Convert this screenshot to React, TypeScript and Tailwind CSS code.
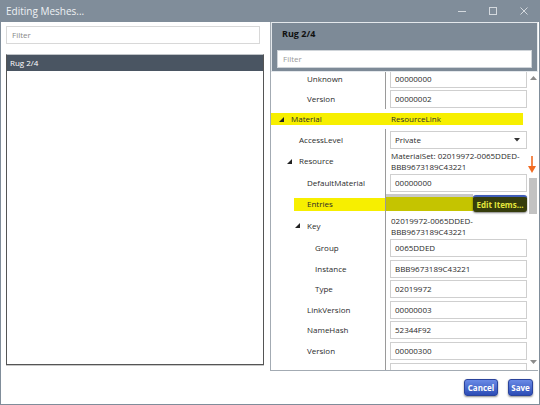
import React from 'react'

type Row = {
  label: string
  kind: 'box' | 'select' | 'two' | 'material' | 'entries'
  h: string
  pl?: string
  exp?: boolean
  value?: string
  lines?: string[]
}

const rows: Row[] = [
  { label: 'Unknown', kind: 'box', h: 'h-[21px]', pl: 'pl-[36px]', value: '00000000' },
  { label: 'Version', kind: 'box', h: 'h-[20px]', pl: 'pl-[36px]', value: '00000002' },
  { label: 'Material', kind: 'material', h: 'h-[20px]' },
  { label: 'AccessLevel', kind: 'select', h: 'h-[21px]', pl: 'pl-[28px]', value: 'Private' },
  {
    label: 'Resource',
    kind: 'two',
    h: 'h-[22px]',
    pl: 'pl-[16px]',
    exp: true,
    lines: ['MaterialSet: 02019972-0065DDED-', 'BBB9673189C43221'],
  },
  { label: 'DefaultMaterial', kind: 'box', h: 'h-[22px]', pl: 'pl-[36px]', value: '00000000' },
  { label: 'Entries', kind: 'entries', h: 'h-[20px]' },
  {
    label: 'Key',
    kind: 'two',
    h: 'h-[23px]',
    pl: 'pl-[24px]',
    exp: true,
    lines: ['02019972-0065DDED-', 'BBB9673189C43221'],
  },
  { label: 'Group', kind: 'box', h: 'h-[21px]', pl: 'pl-[44px]', value: '0065DDED' },
  { label: 'Instance', kind: 'box', h: 'h-[21px]', pl: 'pl-[44px]', value: 'BBB9673189C43221' },
  { label: 'Type', kind: 'box', h: 'h-[20px]', pl: 'pl-[44px]', value: '02019972' },
  { label: 'LinkVersion', kind: 'box', h: 'h-[21px]', pl: 'pl-[36px]', value: '00000003' },
  { label: 'NameHash', kind: 'box', h: 'h-[20px]', pl: 'pl-[36px]', value: '52344F92' },
  { label: 'Version', kind: 'box', h: 'h-[21px]', pl: 'pl-[36px]', value: '00000300' },
  { label: 'MinVertexIndex', kind: 'box', h: 'h-[21px]', pl: 'pl-[12px]', value: '0' },
]

function Expander() {
  return (
    <svg width="5" height="5" viewBox="0 0 5 5" className="shrink-0 mr-[7px]">
      <polygon points="5,0 5,5 0,5" fill="#222" />
    </svg>
  )
}

function ValueBox({ children }: { children: React.ReactNode }) {
  return (
    <div className="h-[18px] w-[137px] border border-[#cfcfcf] bg-white flex items-center pl-[4px]">
      {children}
    </div>
  )
}

function PropRow({ row }: { row: Row }) {
  if (row.kind === 'material') {
    return (
      <div className={`${row.h} flex items-center`}>
        <div className="h-[12px] w-[252px] bg-[#f7ef00] flex items-center pl-[8px]">
          <Expander />
          <span className="w-[100px]">Material</span>
          <span>ResourceLink</span>
        </div>
      </div>
    )
  }

  if (row.kind === 'entries') {
    return (
      <div className={`${row.h} flex`}>
        <div className="w-[115px] shrink-0 border-r border-[#9a9a9a] flex items-center pl-[23px]">
          <div className="h-[13px] flex-1 bg-[#f7ef00] flex items-center pl-[13px]">Entries</div>
        </div>
        <div className="flex-1 flex pr-[1px]">
          <div className="flex-1 flex flex-col">
            <div className="h-[3px] bg-[#c9c9c9]" />
            <div className="h-[14px] bg-[#c5c400]" />
          </div>
          <div className="w-[54px] h-[17px] mt-[1px] rounded-[3px] bg-[#363d0c] border-t-2 border-[#3f5cb8] flex items-center justify-center text-[#e4e63c] font-bold shadow-[0_1px_2px_rgba(0,0,0,0.5)]">
            Edit Items...
          </div>
        </div>
      </div>
    )
  }

  return (
    <div className={`${row.h} flex`}>
      <div className={`w-[115px] shrink-0 border-r border-[#9a9a9a] flex items-center ${row.pl}`}>
        {row.exp && <Expander />}
        <span>{row.label}</span>
      </div>
      <div className="flex-1 pl-[4px] flex items-center">
        {row.kind === 'box' && <ValueBox>{row.value}</ValueBox>}
        {row.kind === 'select' && (
          <ValueBox>
            <span className="flex-1">{row.value}</span>
            <svg width="6" height="4" viewBox="0 0 6 4" className="mr-[6px]">
              <polygon points="0,0 6,0 3,3.5" fill="#333" />
            </svg>
          </ValueBox>
        )}
        {row.kind === 'two' && (
          <div className="pl-[1px] leading-[11px]">
            {row.lines?.map((l) => (
              <div key={l}>{l}</div>
            ))}
          </div>
        )}
      </div>
    </div>
  )
}

function ScrollArrow({ up }: { up?: boolean }) {
  return (
    <svg width="7" height="4" viewBox="0 0 7 4">
      <polygon points={up ? '0,4 7,4 3.5,0' : '0,0 7,0 3.5,4'} fill="#8c8c8c" />
    </svg>
  )
}

export default function App() {
  return (
    <div className="w-[540px] h-[405px] bg-[#808d9a] flex flex-col text-[8px] text-[#2b2b2b] font-['Open_Sans','Noto_Sans',sans-serif] overflow-hidden">
      {/* title bar */}
      <div className="h-[22px] shrink-0 flex items-center pl-[6px] text-[#eef1f4]">
        <span className="text-[10px] flex-1">Editing Meshes...</span>
        <div className="w-[8px] h-px bg-[#d4d9de] mr-[23px]" />
        <div className="w-[8px] h-[8px] border border-[#d4d9de] mr-[23px]" />
        <svg width="8" height="8" viewBox="0 0 8 8" className="mr-[12px]">
          <path d="M0.5 0.5 L7.5 7.5 M7.5 0.5 L0.5 7.5" stroke="#d4d9de" strokeWidth="1" />
        </svg>
      </div>

      {/* body */}
      <div className="flex-1 mx-[1px] mb-[1px] bg-white flex flex-col">
        <div className="h-[349px] flex shrink-0">
          {/* left */}
          <div className="w-[258px] ml-[5px] pt-[4px] flex flex-col">
            <div className="h-[18px] w-[254px] border border-[#d8d8d8] flex items-center pl-[5px] text-[#888]">
              Filter
            </div>
            <div className="mt-[10px] h-[311px] border border-[#555] border-t-[#c0c4c8] shadow-[0_1px_0_#c8c8c8]">
              <div className="h-[16px] bg-[#4a5562] text-white flex items-center pl-[3px]">Rug 2/4</div>
            </div>
          </div>

          {/* right */}
          <div className="ml-[6px] w-[268px] border-l border-b border-[#a3abb3] flex flex-col">
            <div className="h-[50px] shrink-0 bg-[#7d8a97] border border-[#e4e8ec] px-[5px] pt-[5px]">
              <div className="h-[12px] pl-[5px] flex items-center font-bold text-[#111] text-[9px]">Rug 2/4</div>
              <div className="mt-[10px] h-[18px] bg-white border border-[#cfd4d9] flex items-center pl-[5px] text-[#999]">
                Filter
              </div>
            </div>
            <div className="flex-1 flex overflow-hidden relative">
              <div className="w-[257px] shrink-0 overflow-hidden">
                <div className="-mt-[4px]">
                  {rows.map((r, i) => (
                    <PropRow key={i} row={r} />
                  ))}
                </div>
              </div>
              <div className="flex-1 flex flex-col items-center pt-[4px] pb-[6px]">
                <ScrollArrow up />
                <div className="mt-[98px] w-[8px] h-[36px] bg-[#c2c2c2]" />
                <div className="flex-1" />
                <ScrollArrow />
              </div>
              {/* annotation arrow */}
              <svg
                width="10"
                height="18"
                viewBox="0 0 10 18"
                className="absolute left-[256px] top-[84px]"
              >
                <line x1="5" y1="0" x2="5" y2="12" stroke="#f26b22" strokeWidth="1.6" />
                <polygon points="1,10 9,10 5,17" fill="#f26b22" />
              </svg>
            </div>
          </div>
        </div>

        {/* footer */}
        <div className="flex-1 flex justify-end items-start pt-[8px] pr-[6px] gap-[10px]">
          <button className="w-[34px] h-[17px] rounded-[3px] bg-gradient-to-b from-[#6a8ae6] to-[#2c4cb6] border border-[#2a439c] text-white font-bold text-[8px] shadow-[0_1px_2px_rgba(0,0,0,0.45)]">
            Cancel
          </button>
          <button className="w-[25px] h-[17px] rounded-[3px] bg-gradient-to-b from-[#6a8ae6] to-[#2c4cb6] border border-[#2a439c] text-white font-bold text-[8px] shadow-[0_1px_2px_rgba(0,0,0,0.45)]">
            Save
          </button>
        </div>
      </div>
    </div>
  )
}
